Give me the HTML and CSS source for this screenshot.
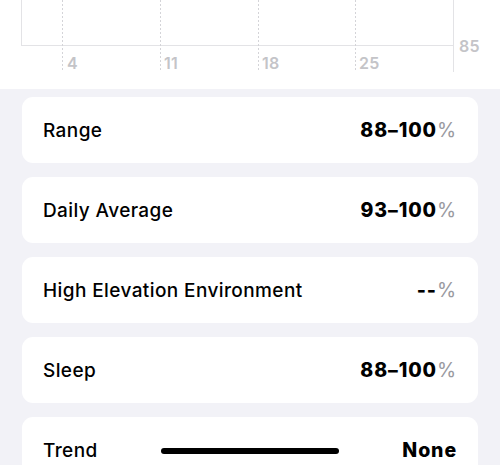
FILE: index.html
```html
<!DOCTYPE html>
<html>
<head>
<meta charset="utf-8">
<meta name="viewport" content="width=device-width, initial-scale=1.0">
<title>Blood Oxygen</title>
<link rel="stylesheet" href="styles.css">
</head>
<body>
	<div class="chart">
		<svg width="500" height="89" viewBox="0 0 500 89">
			<!-- frame -->
			<line x1="21.5" y1="0" x2="21.5" y2="45.5" stroke="#e3e3e6" stroke-width="1"/>
			<line x1="21" y1="45.5" x2="453" y2="45.5" stroke="#e3e3e6" stroke-width="1"/>
			<line x1="453.5" y1="0" x2="453.5" y2="72" stroke="#e3e3e6" stroke-width="1"/>
			<!-- week ticks -->
			<g stroke="#d4d4d8" stroke-width="1" stroke-dasharray="2 2">
				<line x1="62.5" y1="0" x2="62.5" y2="72"/>
				<line x1="160.5" y1="0" x2="160.5" y2="72"/>
				<line x1="258.5" y1="0" x2="258.5" y2="72"/>
				<line x1="355.5" y1="0" x2="355.5" y2="72"/>
			</g>
			<g class="axis">
				<text x="67" y="69">4</text>
				<text x="164" y="69">11</text>
				<text x="262" y="69">18</text>
				<text x="359" y="69">25</text>
				<text x="459" y="52">85</text>
			</g>
		</svg>
	</div>

	<div class="list">
		<div class="card">
			<span class="label">Range</span>
			<span class="value">88–100<em>%</em></span>
		</div>
		<div class="card">
			<span class="label">Daily Average</span>
			<span class="value">93–100<em>%</em></span>
		</div>
		<div class="card">
			<span class="label">High Elevation Environment</span>
			<span class="value">--<em>%</em></span>
		</div>
		<div class="card">
			<span class="label">Sleep</span>
			<span class="value">88–100<em>%</em></span>
		</div>
		<div class="card">
			<span class="label">Trend</span>
			<span class="value">None</span>
		</div>
	</div>

	<div class="home-bar"></div>
</body>
</html>
```

FILE: styles.css
```css
* { margin: 0; padding: 0; box-sizing: border-box; }
html, body { height: 100%; }
body { background: #f2f2f7; font-family: Inter, "Liberation Sans", sans-serif; color: #000; overflow: hidden; }

.chart { height: 89px; background: #fff; }
.chart svg { display: block; }
.axis { font-family: Inter, "Liberation Sans", sans-serif; font-size: 16px; font-weight: 600; fill: #c4c4c8; letter-spacing: 0.3px; }

.list { display: flex; flex-direction: column; gap: 14px; padding: 8px 22px; }
.card { display: flex; align-items: center; justify-content: space-between; height: 66px; padding: 0 21px 0 21px; background: #fff; border-radius: 11px; }
.label { font-size: 19px; font-weight: 500; letter-spacing: 0.4px; }
.value { font-size: 19.5px; font-weight: 800; letter-spacing: 0.9px; }
.value em { font-style: normal; font-weight: 400; color: #9a9aa0; }

.home-bar { position: fixed; left: 161px; top: 448px; width: 178px; height: 6px; border-radius: 3px; background: #000; }
```
